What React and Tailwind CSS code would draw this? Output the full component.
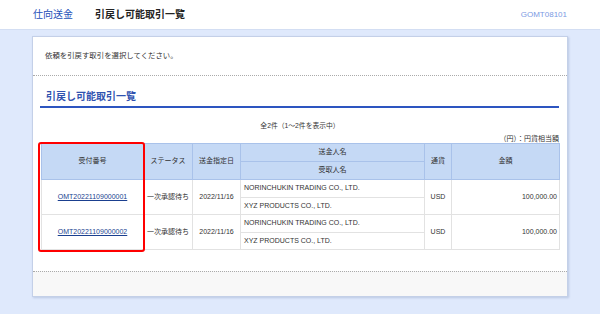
const font = "font-['Liberation_Sans','Noto_Sans_CJK_JP',sans-serif]";

const rows = [
  { id: "OMT20221109000001", status: "一次承認待ち", date: "2022/11/16", sender: "NORINCHUKIN TRADING CO., LTD.", receiver: "XYZ PRODUCTS CO., LTD.", cur: "USD", amount: "100,000.00" },
  { id: "OMT20221109000002", status: "一次承認待ち", date: "2022/11/16", sender: "NORINCHUKIN TRADING CO., LTD.", receiver: "XYZ PRODUCTS CO., LTD.", cur: "USD", amount: "100,000.00" },
];

function ResultTable() {
  const th = "border border-[#a9c2ea] bg-[#c5d9f5] font-normal text-[#333] text-center";
  const td = "border border-[#e2e2e2] text-[#333]";
  return (
    <div className="relative">
      <table className="w-[518px] border-collapse table-fixed text-[7px]">
        <colgroup>
          <col className="w-[102px]" />
          <col className="w-[49px]" />
          <col className="w-[48px]" />
          <col className="w-[184px]" />
          <col className="w-[27px]" />
          <col className="w-[108px]" />
        </colgroup>
        <thead>
          <tr className="h-[18px]">
            <th rowSpan={2} className={th}>受付番号</th>
            <th rowSpan={2} className={th}>ステータス</th>
            <th rowSpan={2} className={th}>送金指定日</th>
            <th className={th}>送金人名</th>
            <th rowSpan={2} className={th}>通貨</th>
            <th rowSpan={2} className={th}>金額</th>
          </tr>
          <tr className="h-[18px]">
            <th className={th}>受取人名</th>
          </tr>
        </thead>
        <tbody>
          {rows.map((r) => [
            <tr key={r.id + "a"} className="h-[18px]">
              <td rowSpan={2} className={`${td} text-center`}>
                <a href="#" className="text-[#1a3f8f] underline">{r.id}</a>
              </td>
              <td rowSpan={2} className={`${td} text-center whitespace-nowrap`}>{r.status}</td>
              <td rowSpan={2} className={`${td} text-center`}>{r.date}</td>
              <td className={`${td} pl-[3px]`}>{r.sender}</td>
              <td rowSpan={2} className={`${td} text-center`}>{r.cur}</td>
              <td rowSpan={2} className={`${td} text-right pr-[2px]`}>{r.amount}</td>
            </tr>,
            <tr key={r.id + "b"} className="h-[17px]">
              <td className={`${td} pl-[3px]`}>{r.receiver}</td>
            </tr>,
          ])}
        </tbody>
      </table>
      <div className="absolute left-[-3px] top-[-1px] w-[107px] h-[110px] border-[2.5px] border-[#ff0000] rounded-[3px] pointer-events-none" />
    </div>
  );
}

export default function App() {
  return (
    <div className={`${font} w-[600px] h-[314px] bg-[#dfe9fc] flex flex-col`}>
      <header className="h-[30px] bg-white border-b border-[#d3def3] flex items-center px-[33px]">
        <span className="text-[10px] text-[#2450b8]">仕向送金</span>
        <span className="ml-[22px] text-[10px] font-bold text-[#222]">引戻し可能取引一覧</span>
        <span className="ml-auto text-[8px] text-[#7b9ae3]">GOMT08101</span>
      </header>
      <div className="px-[32px] pt-[6px]">
        <div className="bg-white border border-[#c4d0e8] shadow-[1px_1px_2px_rgba(120,140,180,0.35)] h-[261px] flex flex-col">
          <div className="h-[39px] flex items-center px-[12px] text-[7.4px] text-[#333] border-b border-dotted border-[#aaa]">
            依頼を引戻す取引を選択してください。
          </div>
          <div className="flex-1 pl-[7px] pr-[8px]">
            <div className="mt-[13px] h-[19px] border-b-2 border-[#2d55c0] pl-[6px] text-[10px] font-bold text-[#2f52b0] leading-[16px]">
              引戻し可能取引一覧
            </div>
            <div className="pl-[1px]">
              <div className="mt-[13px] text-center text-[6.8px] text-[#333] leading-[9px]">
                全2件（1～2件を表示中）
              </div>
              <div className="mt-[4px] text-right text-[7px] text-[#333] leading-[10px]">
                （円）：円貨相当額
              </div>
              <div className="-mt-[1px]">
                <ResultTable />
              </div>
            </div>
          </div>
          <div className="h-[25px] bg-[#f8f8f8] border-t border-dotted border-[#aaa]" />
        </div>
      </div>
    </div>
  );
}
